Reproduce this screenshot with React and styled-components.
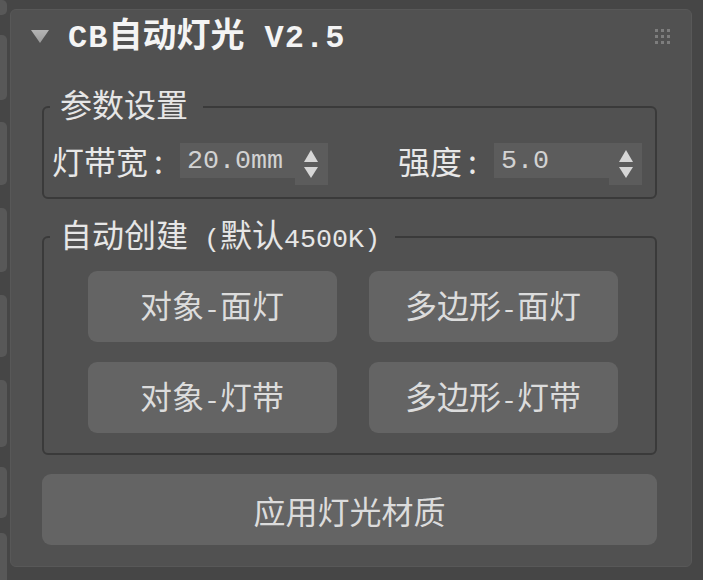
import React from 'react';
import styled, { createGlobalStyle } from 'styled-components';

const GlobalStyle = createGlobalStyle`
  html, body {
    margin: 0;
    padding: 0;
    background: #464646;
  }
  body {
    font-family: "Noto Sans CJK SC", "Noto Sans", sans-serif;
  }
`;

const CJK = `"Noto Sans CJK SC", "Noto Sans", sans-serif`;
const MONO = `"Liberation Mono", "Noto Sans CJK SC", monospace`;

const Screen = styled.div`
  display: flex;
  align-items: flex-start;
  width: 703px;
  height: 580px;
  overflow: hidden;
  background: #464646;
`;

const TabStrip = styled.div`
  flex: none;
  width: 7px;
  height: 580px;
  margin-right: 3px;
  display: flex;
  flex-direction: column;
`;

const Tab = styled.div`
  flex: none;
  height: ${(p) => p.$h}px;
  margin-top: ${(p) => p.$gap}px;
  background: #585858;
  border-radius: 0 5px 5px 0;
`;

const Panel = styled.section`
  flex: none;
  margin-top: 9px;
  width: 682px;
  height: 558px;
  box-sizing: border-box;
  background: #515151;
  border: 1px solid #585858;
  border-radius: 6px;
  display: flex;
  flex-direction: column;
`;

const Header = styled.header`
  height: 52px;
  display: flex;
  align-items: center;
  padding: 0 21px 0 20px;
`;

const Title = styled.h1`
  margin: 0 0 0 19px;
  flex: 1;
  font-family: ${CJK};
  font-size: 34px;
  line-height: 40px;
  font-weight: 700;
  color: #f4f4f4;
  white-space: pre;
`;

const TitleLatin = styled.span`
  font-family: ${MONO};
  font-size: 32px;
  font-weight: 700;
  letter-spacing: 1px;
`;

const Body = styled.div`
  padding: 25px 34px 0 31px;
  display: flex;
  flex-direction: column;
`;

const Group = styled.fieldset`
  margin: ${(p) => p.$mt || 0}px 0 0;
  padding: ${(p) => p.$pad};
  border: 2px solid #3a3a3a;
  border-radius: 6px;
  min-width: 0;
`;

const Legend = styled.legend`
  margin-left: 6px;
  height: 32px;
  box-sizing: content-box;
  padding: 0 ${(p) => p.$pr}px 8px 10px;
  font-family: ${CJK};
  font-size: 32px;
  line-height: 32px;
  color: #e6e6e6;
  white-space: pre;
`;

const Latin = styled.span`
  font-family: ${MONO};
  font-size: 26.7px;
  line-height: 1;
`;

const ParamRow = styled.div`
  display: flex;
  justify-content: space-between;
  align-items: flex-start;
  padding: 0 13px 0 8px;
`;

const Param = styled.div`
  display: flex;
  align-items: flex-start;
  gap: 17px;
`;

const Label = styled.span`
  font-family: ${CJK};
  font-size: 32px;
  line-height: 35px;
  color: #e8e8e8;
`;

const Colon = styled.span`
  display: inline-block;
  margin-left: 6px;
`;

const Spinner = styled.div`
  display: flex;
  align-items: flex-start;
`;

const Edit = styled.div`
  width: 115px;
  height: 35px;
  box-sizing: border-box;
  padding-left: 7px;
  background: #5c5c5c;
  display: flex;
  align-items: center;
  font-family: ${MONO};
  font-size: 26.7px;
  color: #d2d2d2;
`;

const Arrows = styled.div`
  width: 33px;
  height: 42px;
  background: #5c5c5c;
  display: flex;
  flex-direction: column;
  align-items: center;
  justify-content: center;
  gap: 5px;
`;

const ButtonGrid = styled.div`
  display: grid;
  grid-template-columns: repeat(2, 249px);
  grid-auto-rows: 71px;
  column-gap: 32px;
  row-gap: 20px;
  justify-content: center;
  padding-left: 6px;
`;

const ActionButton = styled.button`
  height: ${(p) => p.$h || 71}px;
  margin: 0;
  padding: 0;
  border: none;
  border-radius: 9px;
  background: #646464;
  color: #dcdcdc;
  font-family: ${CJK};
  font-size: 32px;
  line-height: 1;
  white-space: pre;
  cursor: pointer;
`;

const ApplyButton = styled(ActionButton)`
  margin-top: 19px;
  width: 100%;
`;

const Collapse = () => (
  <svg width="18" height="13" viewBox="0 0 18 13">
    <defs>
      <linearGradient id="tri" x1="0" y1="0" x2="0" y2="1">
        <stop offset="0" stopColor="#b4b4b4" />
        <stop offset="1" stopColor="#9a9a9a" />
      </linearGradient>
    </defs>
    <polygon points="0,0 18,0 9,13" fill="url(#tri)" />
  </svg>
);

const Grip = () => (
  <svg width="15" height="15" viewBox="0 0 15 15">
    {[0, 6, 12].map((y) =>
      [0, 6, 12].map((x) => (
        <rect key={`${x}-${y}`} x={x} y={y} width="3" height="3" fill="#7d7d7d" />
      ))
    )}
  </svg>
);

const SpinArrows = () => (
  <Arrows>
    <svg width="14" height="12" viewBox="0 0 14 12">
      <polygon points="7,0 14,12 0,12" fill="#d6d6d6" />
    </svg>
    <svg width="14" height="11" viewBox="0 0 14 11">
      <polygon points="0,0 14,0 7,11" fill="#d6d6d6" />
    </svg>
  </Arrows>
);

const tabs = [
  { gap: 0, h: 15 },
  { gap: 20, h: 65 },
  { gap: 22, h: 63 },
  { gap: 23, h: 64 },
  { gap: 23, h: 62 },
  { gap: 23, h: 67 },
  { gap: 20, h: 51 },
  { gap: 15, h: 60 },
];

const Dash = () => <Latin>-</Latin>;

export default function App() {
  return (
    <>
      <GlobalStyle />
      <Screen>
        <TabStrip>
          {tabs.map((t, i) => (
            <Tab key={i} $gap={t.gap} $h={t.h} />
          ))}
        </TabStrip>
        <Panel>
          <Header>
            <Collapse />
            <Title>
              <TitleLatin>CB</TitleLatin>自动灯光<TitleLatin> V2.5</TitleLatin>
            </Title>
            <Grip />
          </Header>
          <Body>
            <Group $pad="16px 0 12px">
              <Legend $pr={15}>参数设置</Legend>
              <ParamRow>
                <Param>
                  <Label>灯带宽<Colon>:</Colon></Label>
                  <Spinner>
                    <Edit>20.0mm</Edit>
                    <SpinArrows />
                  </Spinner>
                </Param>
                <Param>
                  <Label>强度<Colon>:</Colon></Label>
                  <Spinner>
                    <Edit>5.0</Edit>
                    <SpinArrows />
                  </Spinner>
                </Param>
              </ParamRow>
            </Group>
            <Group $mt={18} $pad="14px 0 20px">
              <Legend $pr={15}>
                自动创建<Latin> (</Latin>默认<Latin>4500K)</Latin>
              </Legend>
              <ButtonGrid>
                <ActionButton>对象<Dash />面灯</ActionButton>
                <ActionButton>多边形<Dash />面灯</ActionButton>
                <ActionButton>对象<Dash />灯带</ActionButton>
                <ActionButton>多边形<Dash />灯带</ActionButton>
              </ButtonGrid>
            </Group>
            <ApplyButton>应用灯光材质</ApplyButton>
          </Body>
        </Panel>
      </Screen>
    </>
  );
}
